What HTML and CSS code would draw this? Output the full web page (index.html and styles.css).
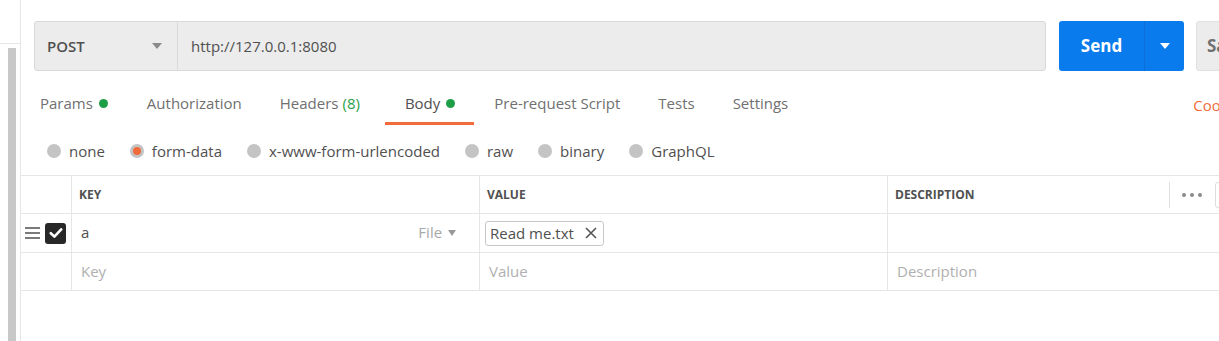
FILE: index.html
```html
<!DOCTYPE html>
<html lang="en">
<head>
<meta charset="utf-8">
<title>Request</title>
<link rel="stylesheet" href="styles.css">
</head>
<body>
<div class="app">
  <aside class="sidebar">
    <div class="sidebar-head"></div>
    <div class="sidebar-scroll"><div class="thumb"></div></div>
  </aside>
  <main class="main">
    <div class="url-row">
      <div class="url-group">
        <div class="method"><span class="method-name">POST</span><span class="caret caret-grey"></span></div>
        <div class="url">http://127.0.0.1:8080</div>
      </div>
      <div class="send">
        <span class="send-label">Send</span>
        <span class="send-drop"><span class="caret caret-white"></span></span>
      </div>
      <div class="save">Save</div>
    </div>

    <nav class="tabs">
      <span class="tab tab-first">Params<span class="dot"></span></span>
      <span class="tab">Authorization</span>
      <span class="tab tab-wide">Headers <span class="count">(8)</span></span>
      <span class="tab active">Body<span class="dot"></span></span>
      <span class="tab">Pre-request Script</span>
      <span class="tab">Tests</span>
      <span class="tab">Settings</span>
      <span class="tab-links"><span class="link">Cookies</span><span class="link">Code</span></span>
    </nav>

    <div class="radios">
      <span class="radio"><span class="circle"></span>none</span>
      <span class="radio"><span class="circle checked"></span>form-data</span>
      <span class="radio"><span class="circle"></span>x-www-form-urlencoded</span>
      <span class="radio"><span class="circle"></span>raw</span>
      <span class="radio"><span class="circle"></span>binary</span>
      <span class="radio"><span class="circle"></span>GraphQL</span>
    </div>

    <div class="table">
      <div class="row head">
        <div class="cell c0"></div>
        <div class="cell c1">KEY</div>
        <div class="cell c2">VALUE</div>
        <div class="cell c3">
          <span class="desc-label">DESCRIPTION</span>
          <span class="head-tools">
            <span class="sep"></span>
            <span class="more"><i></i><i></i><i></i></span>
            <span class="bulk">Bulk Edit</span>
          </span>
        </div>
      </div>
      <div class="row body-row first">
        <div class="cell c0">
          <span class="handle"><i></i><i></i><i></i></span>
          <span class="check">
            <svg width="14" height="12" viewBox="0 0 14 12"><path d="M1.8 6.2 L5.4 9.6 L12.2 2.4" fill="none" stroke="#fff" stroke-width="2.6" stroke-linecap="round" stroke-linejoin="round"/></svg>
          </span>
        </div>
        <div class="cell c1 key-cell">
          <span class="val">a</span>
          <span class="type">File <span class="caret caret-light"></span></span>
        </div>
        <div class="cell c2 chip-cell">
          <span class="chip">Read me.txt
            <svg class="x" width="12" height="12" viewBox="0 0 12 12"><path d="M1 1 L11 11 M11 1 L1 11" stroke="#555" stroke-width="1.6" fill="none"/></svg>
          </span>
        </div>
        <div class="cell c3"></div>
      </div>
      <div class="row body-row">
        <div class="cell c0"></div>
        <div class="cell c1 ph">Key</div>
        <div class="cell c2 ph">Value</div>
        <div class="cell c3 ph">Description</div>
      </div>
    </div>
  </main>
</div>
</body>
</html>
```
FILE: styles.css
```css
* { box-sizing: border-box; }
html, body {
  margin: 0;
  padding: 0;
  background: #fff;
}
body {
  width: 1219px;
  height: 341px;
  overflow: hidden;
  font-family: "Open Sans", "Noto Sans", sans-serif;
  font-size: 15px;
  color: #505050;
}
.app {
  display: flex;
  height: 341px;
}
.sidebar {
  width: 21px;
  flex-shrink: 0;
  border-right: 1px solid #e6e6e6;
  display: flex;
  flex-direction: column;
}
.sidebar-head {
  height: 44px;
  border-bottom: 1px solid #e6e6e6;
}
.sidebar-scroll {
  flex: 1;
  padding: 4px 0 0 8px;
}
.thumb {
  width: 8px;
  height: 100%;
  background: #c8c8c8;
}
.main {
  flex: 1;
  min-width: 0;
  overflow: hidden;
}

/* URL row */
.url-row {
  display: flex;
  padding: 21px 0 0 13px;
  height: 71px;
}
.url-group {
  display: flex;
  width: 1012px;
  flex-shrink: 0;
  height: 50px;
  background: #ececec;
  border: 1px solid #d9d9d9;
  border-radius: 3px;
}
.method {
  width: 143px;
  display: flex;
  align-items: center;
  justify-content: space-between;
  padding: 0 15px 1px 12px;
  border-right: 1px solid #d9d9d9;
}
.method-name {
  font-weight: 600;
  font-size: 15px;
  color: #505050;
}
.caret {
  display: inline-block;
  width: 0;
  height: 0;
  border-left: 5px solid transparent;
  border-right: 5px solid transparent;
  border-top: 6px solid #808080;
}
.caret-grey { border-top-color: #8a8a8a; }
.caret-white { border-top-color: #fff; }
.caret-light {
  border-left-width: 4.5px;
  border-right-width: 4.5px;
  border-top-width: 6px;
  border-top-color: #9a9a9a;
  vertical-align: 2px;
  margin-left: 2px;
}
.url {
  display: flex;
  align-items: center;
  padding: 0 0 1px 13px;
  color: #505050;
}
.send {
  margin-left: 13px;
  width: 125px;
  height: 50px;
  flex-shrink: 0;
  display: flex;
  background: #097bed;
  border-radius: 3px;
  color: #fff;
}
.send-label {
  width: 86px;
  display: flex;
  align-items: center;
  justify-content: center;
  padding-bottom: 1px;
  font-weight: 700;
  font-size: 17px;
  border-right: 1px solid #0a6ed6;
}
.send-drop {
  flex: 1;
  display: flex;
  align-items: center;
  justify-content: center;
}
.save {
  margin-left: 12px;
  width: 90px;
  height: 50px;
  flex-shrink: 0;
  display: flex;
  align-items: center;
  padding: 0 0 1px 10px;
  background: #ececec;
  border: 1px solid #e0e0e0;
  border-radius: 3px;
  font-weight: 700;
  font-size: 17px;
  color: #707070;
}

/* Tabs */
.tabs {
  display: flex;
  width: 1295px;
  height: 54px;
}
.tab {
  display: flex;
  align-items: center;
  padding: 21px 18px 8px 20px;
  height: 54px;
  line-height: 22px;
  border-bottom: 3px solid transparent;
  color: #707070;
  white-space: nowrap;
}
.tab-first { margin-left: -1px; padding-right: 19px; }
.tab-wide { padding-right: 25px; }
.tab.active {
  color: #505050;
  padding-right: 19px;
  border-bottom-color: #f26b3a;
}
.dot {
  width: 9px;
  height: 9px;
  border-radius: 50%;
  background: #1f9e48;
  margin-left: 6px;
}
.count { color: #2e9e48; margin-left: 4px; }
.tab-links {
  margin-left: auto;
  display: flex;
  align-items: center;
  padding: 21px 12px 8px 0;
  height: 54px;
}
.link {
  color: #f26b3a;
  margin-left: 20px;
}

/* Radios */
.radios {
  display: flex;
  align-items: center;
  height: 50px;
  padding: 1px 0 0 26px;
}
.radio {
  display: flex;
  align-items: center;
  margin-right: 25px;
  color: #505050;
  white-space: nowrap;
}
.circle {
  width: 14px;
  height: 14px;
  border-radius: 50%;
  background: #c4c4c4;
  margin-right: 8px;
  display: flex;
  align-items: center;
  justify-content: center;
}
.circle.checked::after {
  content: "";
  width: 8px;
  height: 8px;
  border-radius: 50%;
  background: #f26b3a;
}

/* Table */
.table {
  border-top: 1px solid #e6e6e6;
  width: 1284px;
}
.row {
  display: flex;
  border-bottom: 1px solid #e6e6e6;
}
.row.head { height: 38px; }
.row.body-row { height: 38px; }
.row.body-row.first { height: 39px; }
.cell {
  display: flex;
  align-items: center;
  border-right: 1px solid #e6e6e6;
  white-space: nowrap;
}
.c0 { width: 51px; }
.c1, .c2 { width: 408px; }
.c3 { flex: 1; border-right: none; }
.head .cell {
  font-size: 12px;
  font-weight: 700;
  color: #505050;
  padding-left: 7px;
}
.head .c0 { padding-left: 0; }
.desc-label { flex: 1; }
.head-tools {
  display: flex;
  align-items: center;
  height: 100%;
}
.sep {
  width: 1px;
  height: 26px;
  background: #e0e0e0;
}
.more {
  display: flex;
  gap: 4px;
  padding: 0 13px 0 12px;
}
.more i {
  width: 4px;
  height: 4px;
  border-radius: 50%;
  background: #8a8a8a;
}
.bulk {
  width: 80px;
  height: 26px;
  margin-right: 10px;
  border: 1px solid #dcdcdc;
  border-radius: 3px;
  font-weight: 400;
  color: transparent;
  overflow: hidden;
}
.body-row .cell { padding: 0 0 2px 9px; }
.body-row .c0 { padding: 0 0 0 4px; }
.handle {
  display: flex;
  flex-direction: column;
  gap: 2.6px;
  width: 15px;
  margin-right: 5px;
}
.handle i {
  display: block;
  height: 2px;
  background: #7a7a7a;
}
.check {
  width: 21px;
  height: 21px;
  border-radius: 3px;
  background: #282828;
  display: flex;
  align-items: center;
  justify-content: center;
}
.key-cell.cell { justify-content: space-between; padding-right: 23px; }
.val { color: #505050; }
.type { color: #a8a8a8; }
.chip-cell.cell { padding: 0 0 0 5px; }
.chip {
  display: flex;
  align-items: center;
  height: 25px;
  padding: 0 6px 1px 4px;
  border: 1px solid #c8c8c8;
  border-radius: 3px;
  color: #505050;
}
.chip .x { margin-left: 11px; margin-top: 1px; }
.ph { color: #b0b0b0; }
```
